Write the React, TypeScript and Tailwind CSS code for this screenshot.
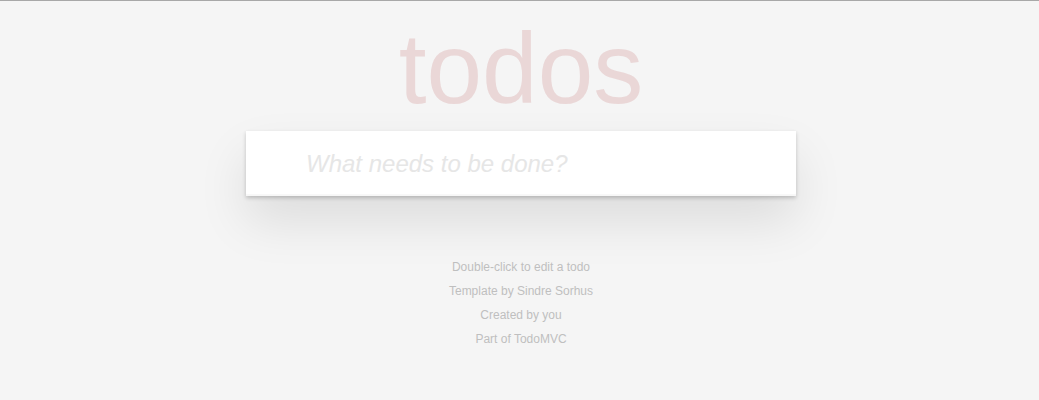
export default function App() {
  return (
    <div
      className="min-h-[400px] bg-[#f5f5f5] border-t border-[#a8a8a8] pl-[3px]"
      style={{ fontFamily: '"Liberation Sans", Arial, sans-serif' }}
    >
      <div className="w-[550px] mx-auto">
        <h1 className="mt-[17px] h-[100px] text-[100px] leading-[100px] font-normal text-center text-[rgba(175,47,47,0.15)]">
          todos
        </h1>

        <div className="mt-[13px] bg-white shadow-[0_2px_4px_0_rgba(0,0,0,0.2),0_25px_50px_0_rgba(0,0,0,0.1)]">
          <input
            className="block w-full h-[65px] pl-[60px] pr-4 py-4 text-[24px] leading-[33.6px] text-[#4d4d4d] bg-transparent outline-none placeholder:italic placeholder:text-[#e6e6e6] shadow-[inset_0_-2px_1px_rgba(0,0,0,0.03)]"
            placeholder="What needs to be done?"
          />
        </div>

        <footer className="mt-[59px] flex flex-col items-center text-[12px] leading-[24px] text-[#bfbfbf]">
          <p>Double-click to edit a todo</p>
          <p>Template by Sindre Sorhus</p>
          <p>Created by you</p>
          <p>Part of TodoMVC</p>
        </footer>
      </div>
    </div>
  );
}
